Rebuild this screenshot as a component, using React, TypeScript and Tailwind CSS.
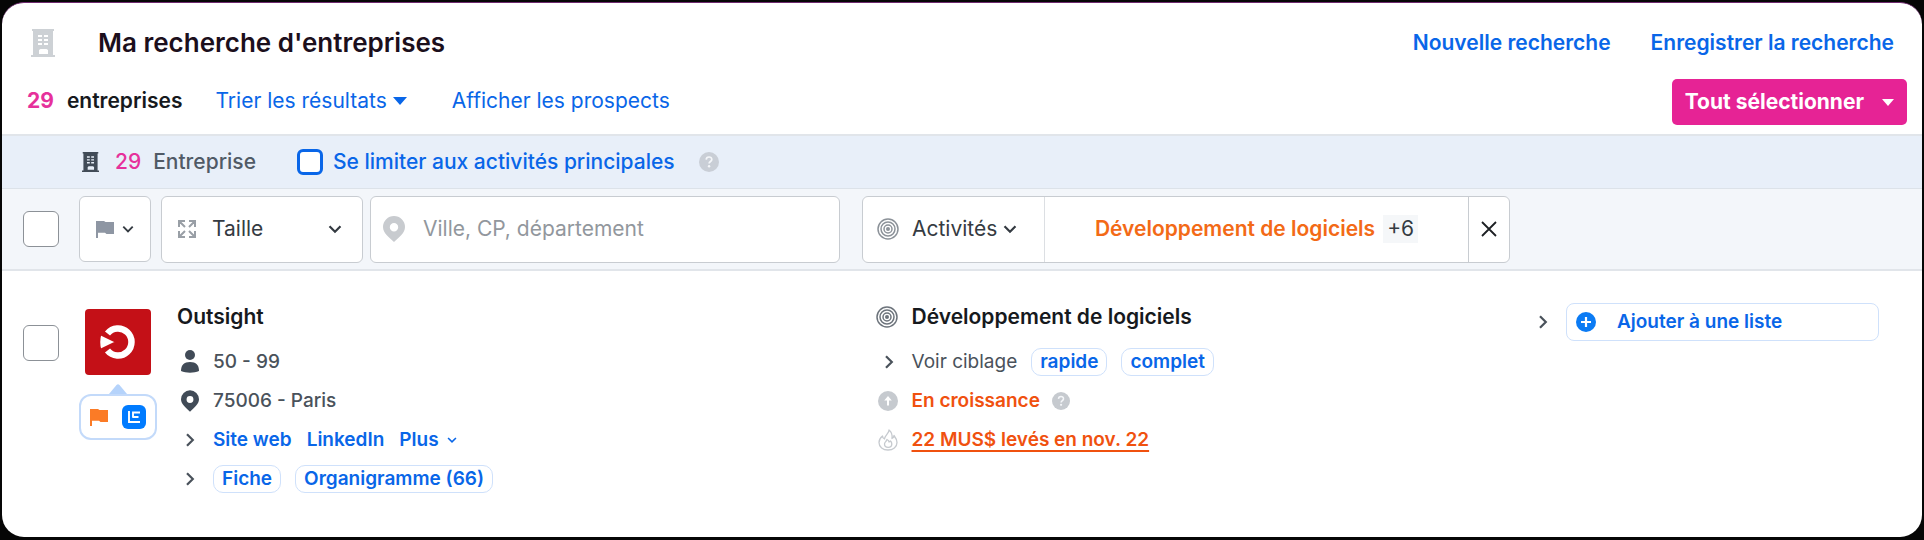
import React, { useState } from 'react';

type IconProps = { className?: string };

const BuildingIcon: React.FC<IconProps> = ({ className }) => (
    <svg viewBox="0 0 24 28" className={className} fill="currentColor" fillRule="evenodd" aria-hidden="true">
        <path d="M1 0h22v2h-1v24h2v2H0v-2h2V2H1zM7 6v2h4V6zm6 0v2h4V6zM7 10v2h4v-2zm6 0v2h4v-2zm-6 4v2h4v-2zm6 0v2h4v-2zM8 21v4h9v-4l-1.500-1h-6z" />
    </svg>
);

const ChevronDown: React.FC<IconProps> = ({ className }) => (
    <svg viewBox="0 0 14 14" className={className} fill="none" stroke="currentColor" strokeWidth="2.2" aria-hidden="true">
        <path d="M1.5 4.2 7 9.7l5.500-5.500" />
    </svg>
);

const ChevronRight: React.FC<IconProps> = ({ className }) => (
    <svg viewBox="0 0 14 14" className={className} fill="none" stroke="currentColor" strokeWidth="2.2" aria-hidden="true">
        <path d="M4 1.200 9.800 7 4 12.800" />
    </svg>
);

const CaretDown: React.FC<IconProps> = ({ className }) => (
    <svg viewBox="0 0 14 8" className={className} fill="currentColor" aria-hidden="true">
        <path d="M0 0h14L7 8z" />
    </svg>
);

const FlagIcon: React.FC<IconProps> = ({ className }) => (
    <svg viewBox="0 0 18 18" className={className} fill="currentColor" aria-hidden="true">
        <path d="M0 1h8l1.500 1H18v12h-7.500L9 12.800H2V18H0z" />
    </svg>
);

const ExpandIcon: React.FC<IconProps> = ({ className }) => (
    <svg viewBox="0 0 18 18" className={className} fill="none" stroke="currentColor" strokeWidth="2" aria-hidden="true">
        <path d="M1 7V1h6M1 1l6 6M11 1h6v6M17 1l-6 6M1 11v6h6M1 17l6-6M11 17h6v-6M17 17l-6-6" />
    </svg>
);

const PinIcon: React.FC<IconProps> = ({ className }) => (
    <svg viewBox="0 0 22 26" className={className} fill="currentColor" fillRule="evenodd" aria-hidden="true">
        <path d="M11 0a11 11 0 0 1 11 11c0 6-6 10.500-11 15C6 21.500 0 17 0 11A11 11 0 0 1 11 0zm0 7a4.200 4.200 0 1 0 0 8.400A4.200 4.200 0 0 0 11 7z" />
    </svg>
);

const TargetIcon: React.FC<IconProps> = ({ className }) => (
    <svg viewBox="0 0 22 22" className={className} fill="none" stroke="currentColor" strokeWidth="1.500" aria-hidden="true">
        <circle cx="11" cy="11" r="10" />
        <circle cx="11" cy="11" r="7" />
        <circle cx="11" cy="11" r="4" />
        <circle cx="11" cy="11" r="2" fill="currentColor" stroke="none" />
    </svg>
);

const HelpIcon: React.FC<IconProps> = ({ className }) => (
    <svg viewBox="0 0 20 20" className={className} aria-hidden="true">
        <circle cx="10" cy="10" r="10" fill="currentColor" />
        <path d="M7.200 7.600c.2-3.600 5.800-3.300 5.600 0-.1 1.900-2.700 1.900-2.700 4" fill="none" stroke="#f4f6f9" strokeWidth="1.700" />
        <circle cx="10.100" cy="14.300" r="1.200" fill="#f4f6f9" />
    </svg>
);

const PersonIcon: React.FC<IconProps> = ({ className }) => (
    <svg viewBox="0 0 18 23" className={className} fill="currentColor" aria-hidden="true">
        <circle cx="9" cy="5" r="5" />
        <path d="M0 21c0-6 3-9 9-9s9 3 9 9c-5 2.300-13 2.300-18 0z" />
    </svg>
);

const ArrowUpCircle: React.FC<IconProps> = ({ className }) => (
    <svg viewBox="0 0 20 20" className={className} aria-hidden="true">
        <circle cx="10" cy="10" r="10" fill="currentColor" />
        <path d="M10 5 13.800 9.500h-2.800V14.500H9V9.500H6.200z" fill="#fff" />
    </svg>
);

const FlameIcon: React.FC<IconProps> = ({ className }) => (
    <svg viewBox="0 0 20 22" className={className} fill="none" stroke="currentColor" strokeWidth="1.300" strokeLinejoin="round" aria-hidden="true">
        <path d="M11 1c.5 3-4.500 5.500-4.500 9C5 9.500 4.500 8 4.500 7 2 9 1 11.500 1 13.500 1 18 5 21 10 21s9-3 9-7.500c0-3-1.500-5-3-7-.2 1.500-.8 2.500-2 3C14.500 6 13.500 3 11 1z" />
        <path d="M6.500 15c0-2 2-2.500 2.500-4.500 1.500.5 2 1.500 2 2.500l1.500-1c1 1 1.300 2 1.300 3 0 2-1.600 3.300-3.600 3.300S6.500 17 6.500 15z" />
    </svg>
);

const PlusCircle: React.FC<IconProps> = ({ className }) => (
    <svg viewBox="0 0 20 20" className={className} aria-hidden="true">
        <circle cx="10" cy="10" r="10" fill="currentColor" />
        <path d="M10 5v10M5 10h10" stroke="#fff" strokeWidth="2.200" />
    </svg>
);

const ListIcon: React.FC<IconProps> = ({ className }) => (
    <svg viewBox="0 0 24 24" className={className} aria-hidden="true">
        <rect width="24" height="24" rx="6" fill="#007bff" />
        <path d="M7 6v11h11M10.500 7.500H18M10.500 12h6M11 6.500v6" fill="none" stroke="#fff" strokeWidth="1.900" />
    </svg>
);

const OutsightLogo: React.FC<IconProps> = ({ className }) => (
    <svg viewBox="0 0 66 66" className={className} role="img" aria-label="Outsight">
        <rect width="66" height="66" rx="4" fill="#c41017" />
        <path d="M22.500 24.500A13.500 13.500 0 1 1 22.500 41.500" fill="none" stroke="#fff" strokeWidth="6.500" />
        <path d="M15.500 25.500 31 33l-15.500 7.500q-2-7.500 0-15z" fill="#fff" stroke="#c41017" strokeWidth="1.500" />
    </svg>
);

const pillClass =
    'flex h-7 items-center rounded-[10px] border border-[#cfe1fb] px-2 font-semibold text-[#0966e8]';

const checkboxClass = 'size-9 shrink-0 appearance-none rounded-md border border-[#8c9197] bg-white checked:bg-[#0966e8]';

const Header: React.FC = () => (
    <header className="border-b-2 border-[#e1e5ea] pr-[15px] pl-[25px]">
        <div className="flex h-20 items-center pr-[13px] pl-1">
            <BuildingIcon className="h-7 w-6 text-[#cdd1d5]" />
            <h1 className="ml-[43px] text-[26px] leading-8 font-semibold text-[#1c0f1c]">Ma recherche d'entreprises</h1>
            <nav className="ml-auto flex gap-10 text-[21px] font-semibold text-[#0966e8]">
                <a href="#nouvelle">Nouvelle recherche</a>
                <a href="#enregistrer">Enregistrer la recherche</a>
            </nav>
        </div>
        <div className="flex h-[51px] items-start text-[21px] leading-6">
            <div className="flex h-9 flex-1 items-center">
                <strong className="font-bold text-[#e6319b]">29</strong>
                <strong className="ml-[13px] font-semibold text-[#16191d]">entreprises</strong>
                <button type="button" className="ml-[33px] flex items-center gap-[6px] text-[#0966e8]">
                    Trier les résultats
                    <CaretDown className="h-2 w-[14px]" />
                </button>
                <a href="#prospects" className="ml-[45px] text-[#0966e8]">Afficher les prospects</a>
            </div>
            <button type="button" className="-mt-1 flex h-[46px] items-center rounded-[5px] bg-[#e62395] px-[13px] font-bold text-white">
                Tout sélectionner
                <CaretDown className="ml-[18px] h-[7px] w-3" />
            </button>
        </div>
    </header>
);

const SummaryBar: React.FC = () => {
    const [mainOnly, setMainOnly] = useState(false);

    return (
        <div className="flex h-[53px] items-center border-b border-[#dce2e9] bg-[#e8eff9] pl-20 text-[21px] leading-6">
            <BuildingIcon className="h-5 w-[17px] text-[#414b57]" />
            <span className="ml-4 font-medium text-[#e6319b]">29</span>
            <span className="ml-3 font-medium text-[#505a66]">Entreprise</span>
            <label className="ml-[41px] flex items-center gap-[10px] font-medium text-[#0966e8]">
                <input
                    type="checkbox"
                    checked={mainOnly}
                    onChange={(e) => setMainOnly(e.target.checked)}
                    className="size-[26px] appearance-none rounded-md border-[3px] border-[#0966e8] bg-white checked:bg-[#0966e8]"
                />
                Se limiter aux activités principales
            </label>
            <HelpIcon className="ml-6 size-5 text-[#c9ced6]" />
        </div>
    );
};

const Filters: React.FC = () => {
    const [city, setCity] = useState('');

    return (
        <div className="flex h-[82px] items-center border-b-2 border-[#e1e5ea] bg-[#f3f6fa] pl-[21px] text-[21px] leading-6 text-[#353b42]">
            <input type="checkbox" aria-label="Tout cocher" className={checkboxClass} />
            <button type="button" aria-label="Drapeau" className="ml-5 flex h-[66px] w-[72px] shrink-0 items-center justify-center gap-2 rounded-md border border-[#c8ccd1] bg-white">
                <FlagIcon className="size-[18px] text-[#8e96a3]" />
                <ChevronDown className="size-3" />
            </button>
            <label className="ml-[10px] flex h-[67px] w-[202px] shrink-0 items-center rounded-md border border-[#c8ccd1] bg-white pr-5 pl-4">
                <ExpandIcon className="size-[18px] shrink-0 text-[#999fa6]" />
                <select aria-label="Taille" className="ml-4 min-w-0 flex-1 appearance-none">
                    <option>Taille</option>
                </select>
                <ChevronDown className="size-[14px] shrink-0" />
            </label>
            <label className="ml-[7px] flex h-[67px] min-w-0 max-w-[470px] flex-1 items-center rounded-md border border-[#c8ccd1] bg-white px-3">
                <PinIcon className="h-[26px] w-[22px] shrink-0 text-[#c8cbcf]" />
                <input
                    type="text"
                    aria-label="Ville, CP, département"
                    placeholder="Ville, CP, département"
                    value={city}
                    onChange={(e) => setCity(e.target.value)}
                    className="ml-[18px] min-w-0 flex-1 outline-none placeholder:text-[#92979d]"
                />
            </label>
            <div className="mr-6 ml-[22px] flex h-[67px] w-[648px] shrink-0 overflow-hidden rounded-md border border-[#c8ccd1] bg-white">
                <button type="button" className="flex w-[182px] items-center border-r border-[#dcdfe3] pl-[14px]">
                    <TargetIcon className="size-[22px] text-[#8c9299]" />
                    <span className="ml-[13px]">Activités</span>
                    <ChevronDown className="ml-[6px] size-[14px]" />
                </button>
                <div className="flex flex-1 items-center justify-center">
                    <span className="font-semibold text-[#f36a16]">Développement de logiciels</span>
                    <span className="ml-2 flex h-7 items-center bg-[#f5f7f9] px-1">+6</span>
                </div>
                <button type="button" aria-label="Effacer" className="flex w-[41px] items-center justify-center border-l border-[#c8ccd1] text-[#1d2024]">
                    <svg viewBox="0 0 16 16" className="size-4" fill="none" stroke="currentColor" strokeWidth="1.800" aria-hidden="true">
                        <path d="M1 1l14 14M15 1 1 15" />
                    </svg>
                </button>
            </div>
        </div>
    );
};

const CompanyRow: React.FC = () => (
    <article className="flex items-start pt-[26px] pr-[43px] pb-[39px] pl-[21px] text-[19px] leading-6 text-[#4a525b]">
        <input type="checkbox" aria-label="Sélectionner Outsight" className={`${checkboxClass} mt-7`} />
        <div className="ml-5 flex w-[78px] shrink-0 flex-col items-center pt-3">
            <OutsightLogo className="size-[66px]" />
            <svg viewBox="0 0 18 10" className="mt-[9px] h-[10px] w-[18px] fill-[#b5d3fb]" aria-hidden="true">
                <path d="M0 10 7.500 1q1.500-1.500 3 0L18 10z" />
            </svg>
            <div className="flex h-[46px] w-full items-center justify-between rounded-xl border-2 border-[#c3dafa] px-[9px]">
                <FlagIcon className="size-[18px] text-[#fb7b26]" />
                <ListIcon className="size-6" />
            </div>
        </div>
        <div className="ml-5 min-w-0 flex-[698]">
            <h2 className="mb-[6px] flex h-[39px] items-center text-[21px] font-semibold text-[#16191d]">Outsight</h2>
            <ul className="font-medium">
                <li className="flex h-[39px] items-center">
                    <span className="mr-3 flex w-6 shrink-0 pl-1"><PersonIcon className="h-[23px] w-[18px] text-[#414b57]" /></span>
                    50 - 99
                </li>
                <li className="flex h-[39px] items-center">
                    <span className="mr-3 flex w-6 shrink-0 pl-1"><PinIcon className="h-[22px] w-[18px] text-[#414b57]" /></span>
                    75006 - Paris
                </li>
                <li className="flex h-[39px] items-center text-[#0966e8]">
                    <span className="mr-3 flex w-6 shrink-0 pl-[6px]"><ChevronRight className="size-[14px] text-[#4a525b]" /></span>
                    <a href="#site" className="font-semibold">Site web</a>
                    <a href="#linkedin" className="ml-[15px] font-semibold">LinkedIn</a>
                    <button type="button" className="ml-[15px] flex items-center gap-2 font-semibold">
                        Plus
                        <ChevronDown className="size-[10px]" />
                    </button>
                </li>
                <li className="flex h-[39px] items-center">
                    <span className="mr-3 flex w-6 shrink-0 pl-[6px]"><ChevronRight className="size-[14px] text-[#4a525b]" /></span>
                    <a href="#fiche" className={pillClass}>Fiche</a>
                    <a href="#organigramme" className={`${pillClass} ml-[14px]`}>Organigramme (66)</a>
                </li>
            </ul>
        </div>
        <div className="min-w-0 flex-[660]">
            <h3 className="mb-[6px] flex h-[39px] items-center text-[21px] font-semibold text-[#16191d]">
                <TargetIcon className="mr-[14px] size-[22px] shrink-0 text-[#6d747c]" />
                Développement de logiciels
            </h3>
            <ul>
                <li className="flex h-[39px] items-center">
                    <span className="mr-3 flex w-6 shrink-0 pl-[6px]"><ChevronRight className="size-[14px]" /></span>
                    Voir ciblage
                    <a href="#rapide" className={`${pillClass} ml-[14px]`}>rapide</a>
                    <a href="#complet" className={`${pillClass} ml-[14px]`}>complet</a>
                </li>
                <li className="flex h-[39px] items-center font-semibold text-[#f0510f]">
                    <span className="mr-3 flex w-6 shrink-0 pl-[2px]"><ArrowUpCircle className="size-5 text-[#c6cacf]" /></span>
                    En croissance
                    <HelpIcon className="ml-3 size-[18px] text-[#c6cacf]" />
                </li>
                <li className="flex h-[39px] items-center font-semibold text-[#f0510f]">
                    <span className="mr-3 flex w-6 shrink-0 pl-[2px]"><FlameIcon className="h-[22px] w-5 text-[#c6cacf]" /></span>
                    <a href="#levee" className="underline decoration-2 underline-offset-4">22 MUS$ levés en nov. 22</a>
                </li>
            </ul>
        </div>
        <div className="mt-[6px] flex shrink-0 items-center">
            <ChevronRight className="mr-4 size-[14px]" />
            <button type="button" className="flex h-[38px] w-[313px] items-center rounded-lg border border-[#cfe1fb] pl-[9px] font-semibold text-[#0966e8]">
                <PlusCircle className="size-5 text-[#0b7bf4]" />
                <span className="ml-[21px]">Ajouter à une liste</span>
            </button>
        </div>
    </article>
);

const App: React.FC = () => (
    <div className="min-h-screen bg-[#060606] px-[2px] pt-[2px] pb-[3px] font-['Inter',sans-serif]">
        <main className="overflow-hidden rounded-[22px] border-t border-[#6f2a6f] bg-white">
            <Header />
            <SummaryBar />
            <Filters />
            <CompanyRow />
        </main>
    </div>
);

export default App;
